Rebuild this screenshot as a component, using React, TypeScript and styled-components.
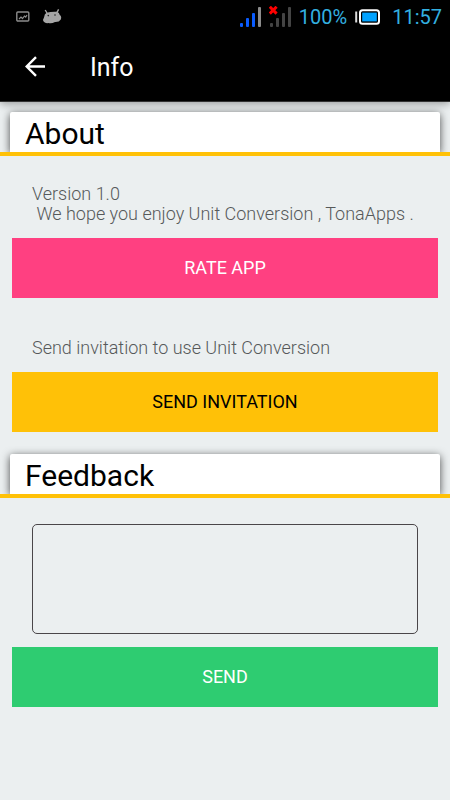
import React from "react";
import styled, { createGlobalStyle } from "styled-components";

const GlobalStyle = createGlobalStyle`
  *, *::before, *::after { box-sizing: border-box; }
  body { margin: 0; background: #ebeff0; font-family: Roboto, "Noto Sans", sans-serif; }
  h1, h2, p { margin: 0; font-weight: 400; }
`;

const Screen = styled.div`
  display: flex;
  flex-direction: column;
  min-height: 100vh;
  background: #ebeff0;
`;

const StatusBar = styled.div`
  display: flex;
  align-items: center;
  justify-content: space-between;
  height: 33px;
  padding: 0 8px 0 16px;
  background: #000;
  color: #33b0e0;
  font-size: 20px;
  line-height: 32px;
`;

const StatusGroup = styled.div<{ $gap: number }>`
  display: flex;
  align-items: center;
  gap: ${({ $gap }) => $gap}px;

  svg { display: block; flex: none; }
`;

const Clock = styled.time`
  margin-left: 4px;
`;

const AppBar = styled.header`
  display: flex;
  align-items: center;
  gap: 42px;
  height: 69px;
  padding: 0 24px;
  background: #000;
  border-bottom: 1px solid #333;
  box-shadow: 0 2px 8px rgba(0, 0, 0, 0.35);
  color: #fff;
`;

const BackButton = styled.button`
  display: block;
  padding: 0;
  border: 0;
  background: none;
  color: #fff;

  svg { display: block; }
`;

const BarTitle = styled.h1`
  font-size: 25px;
  line-height: 34px;
  padding-top: 2px;
`;

const Content = styled.main`
  padding-top: 10px;
`;

const SectionHead = styled.div`
  overflow: hidden;
  padding: 8px 10px 0;
  margin-top: -8px;
  border-bottom: 4px solid #ffc107;
`;

const SectionTitle = styled.h2`
  height: 40px;
  padding-left: 15px;
  border-radius: 2px 2px 0 0;
  background: #fff;
  box-shadow: 0 2px 8px rgba(0, 0, 0, 0.7);
  color: #000;
  font-size: 30px;
  line-height: 44px;
`;

const SectionBody = styled.section`
  display: flex;
  flex-direction: column;
  padding: 28px 12px 22px;
`;

const Note = styled.p<{ $spaced?: boolean }>`
  margin-top: ${({ $spaced }) => ($spaced ? 40 : 0)}px;
  padding: 0 20px;
  color: #56595a;
  font-size: 18px;
  font-weight: 300;
  line-height: 20px;
  white-space: pre-wrap;
`;

const ActionButton = styled.button<{ $bg: string; $fg: string }>`
  height: 60px;
  margin-top: 14px;
  padding: 0 0 1px;
  border: 0;
  background: ${({ $bg }) => $bg};
  color: ${({ $fg }) => $fg};
  font: 400 18px Roboto, "Noto Sans", sans-serif;
  text-transform: uppercase;
`;

const FeedbackBox = styled.textarea`
  height: 110px;
  margin: -2px 20px -1px;
  padding: 8px;
  border: 1px solid #4a4649;
  border-radius: 5px;
  background: transparent;
  color: #333;
  font: 400 18px Roboto, "Noto Sans", sans-serif;
  resize: none;
`;

function PictureIcon() {
  return (
    <svg width="14" height="12" viewBox="0 0 14 12" fill="none" stroke="#8c8c8c" aria-hidden="true">
      <rect x=".8" y="1" width="12" height="9" rx="1" strokeWidth="1.4" />
      <path d="M3 8l2-2 1.5 1.5 2-2.5 1.2 1L11 4" strokeWidth="1.2" />
    </svg>
  );
}

function DroidIcon() {
  return (
    <svg width="20" height="16" viewBox="0 0 20 16" aria-hidden="true">
      <path d="M3.2 1L5 4M16.6.4L14.9 3.6" stroke="#a6a6a6" strokeWidth="1.4" />
      <path
        d="M4.5 3.8Q9.5 2.4 15 2.8Q17.4 3.8 17.8 6Q20 7.6 18.8 10.4Q17.2 13.2 13 13Q9.5 14.8 6.5 14Q3.4 14.6 1.8 12.8Q.2 10.6 2 8.4Q2.4 5.2 4.5 3.8Z"
        fill="#a6a6a6"
      />
      <circle cx="6.3" cy="6.6" r=".8" fill="#222" />
      <circle cx="13" cy="6" r=".8" fill="#222" />
    </svg>
  );
}

function SignalIcon({ colors, missing }: { colors: string[]; missing?: boolean }) {
  const heights = [4, 9, 14, 20];
  return (
    <svg width="22" height="22" viewBox="0 0 22 22" aria-hidden="true">
      {heights.map((h, i) => (
        <rect key={h} x={1 + i * 6} y={21 - h} width="3" height={h} rx="1" fill={colors[i]} />
      ))}
      {missing && <path d="M.8 .8l6.8 6.8M7.6 .8L.8 7.6" stroke="#f00" strokeWidth="3" />}
    </svg>
  );
}

function BatteryIcon() {
  return (
    <svg width="25" height="16" viewBox="0 0 25 16" aria-hidden="true">
      <path d="M1.2 2.5v11" stroke="#ddd" strokeWidth="2" />
      <rect x="5" y="1.2" width="19" height="13.6" rx="2.5" fill="#000" stroke="#fff" strokeWidth="2" />
      <rect x="7.2" y="3.6" width="14.6" height="8.8" fill="#00a2ff" />
    </svg>
  );
}

function BackArrow() {
  return (
    <svg width="24" height="24" viewBox="0 0 24 24" fill="none" stroke="currentColor" strokeWidth="2.4" aria-hidden="true">
      <path d="M21 11.5H3.2M12 2.2L2.7 11.5l9.3 9.3" />
    </svg>
  );
}

export default function App() {
  return (
    <>
      <GlobalStyle />
      <Screen>
        <StatusBar>
          <StatusGroup $gap={12}>
            <PictureIcon />
            <DroidIcon />
          </StatusGroup>
          <StatusGroup $gap={8}>
            <SignalIcon colors={["#0a5cff", "#0a5cff", "#0a5cff", "#8c8c8c"]} />
            <SignalIcon colors={["#444", "#444", "#444", "#444"]} missing />
            <span>100%</span>
            <BatteryIcon />
            <Clock>11:57</Clock>
          </StatusGroup>
        </StatusBar>
        <AppBar>
          <BackButton type="button" aria-label="Back">
            <BackArrow />
          </BackButton>
          <BarTitle>Info</BarTitle>
        </AppBar>
        <Content>
          <SectionHead>
            <SectionTitle>About</SectionTitle>
          </SectionHead>
          <SectionBody>
            <Note>{"Version 1.0\n We hope you enjoy Unit Conversion , TonaApps ."}</Note>
            <ActionButton type="button" $bg="#ff4081" $fg="#fff">Rate app</ActionButton>
            <Note $spaced>Send invitation to use Unit Conversion</Note>
            <ActionButton type="button" $bg="#ffc107" $fg="#000">Send invitation</ActionButton>
          </SectionBody>
          <SectionHead>
            <SectionTitle id="feedback-title">Feedback</SectionTitle>
          </SectionHead>
          <SectionBody>
            <FeedbackBox aria-labelledby="feedback-title" />
            <ActionButton type="button" $bg="#2ecc71" $fg="#fff">Send</ActionButton>
          </SectionBody>
        </Content>
      </Screen>
    </>
  );
}
